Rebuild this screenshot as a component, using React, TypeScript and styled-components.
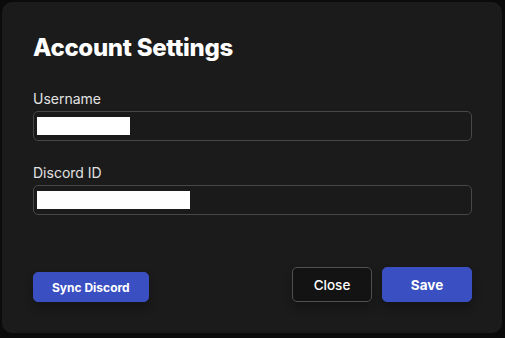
import React from 'react'
import styled, { createGlobalStyle } from 'styled-components'

const GlobalStyle = createGlobalStyle`
  html, body {
    margin: 0;
    padding: 0;
    background: #0b0b0b;
    font-family: Inter, "Noto Sans", "Liberation Sans", sans-serif;
    overflow: hidden;
  }
`

const StyledPage = styled.div`
  width: 505px;
  height: 338px;
  padding: 2px 3px 0 2px;
  box-sizing: border-box;
  display: flex;
  flex-direction: column;
  align-items: stretch;
`

const StyledModal = styled.div`
  flex: none;
  height: 331px;
  box-sizing: border-box;
  background: #1b1b1b;
  border-radius: 10px;
  padding: 31px 30px 31px 31px;
  display: flex;
  flex-direction: column;
`

const StyledTitle = styled.h2`
  margin: 0 0 27px 0;
  font-size: 24px;
  line-height: 30px;
  font-weight: 800;
  color: #ffffff;
  letter-spacing: -0.3px;
`

const StyledField = styled.div`
  display: flex;
  flex-direction: column;
  margin-bottom: 23px;
`

const StyledLabel = styled.label`
  font-size: 14px;
  line-height: 17px;
  color: #e2e2e2;
  margin-bottom: 4px;
`

const StyledInput = styled.div`
  height: 30px;
  box-sizing: border-box;
  border: 1px solid #474747;
  border-radius: 5px;
  background: #1a1a1a;
  display: flex;
  align-items: center;
  padding: 0 3px;
`

const StyledRedacted = styled.div<{ $width: number }>`
  width: ${props => props.$width}px;
  height: 18px;
  background: #ffffff;
`

const StyledFooter = styled.div`
  margin-top: auto;
  display: flex;
  justify-content: space-between;
  align-items: flex-end;
`

const StyledGroup = styled.div`
  display: flex;
  gap: 10px;
`

const StyledButton = styled.button<{ $primary?: boolean; $small?: boolean }>`
  box-sizing: border-box;
  height: ${props => (props.$small ? '30px' : '35px')};
  padding: 0 ${props => (props.$small ? '18px' : '0')};
  width: ${props => (props.$small ? 'auto' : '80px')};
  border-radius: 5px;
  border: 1px solid ${props => (props.$primary ? '#3a4fc2' : '#505050')};
  background: ${props => (props.$primary ? '#3a4fc2' : '#131313')};
  color: #ffffff;
  font-family: inherit;
  font-size: ${props => (props.$small ? '12px' : '13.5px')};
  font-weight: ${props => (props.$primary ? 700 : 500)};
  box-shadow: 0 6px 10px rgba(0, 0, 0, 0.25);
  cursor: pointer;
`

const StyledSaveButton = styled(StyledButton)`
  width: 90px;
`

const StyledBehind = styled.div`
  text-align: center;
  padding-top: 2px;
  font-size: 14px;
  font-weight: 600;
  color: #8a8a8a;
`

const App: React.FC = () => {
  return (
    <>
      <GlobalStyle />
      <StyledPage>
        <StyledModal>
          <StyledTitle>Account Settings</StyledTitle>
          <StyledField>
            <StyledLabel>Username</StyledLabel>
            <StyledInput>
              <StyledRedacted $width={93} />
            </StyledInput>
          </StyledField>
          <StyledField>
            <StyledLabel>Discord ID</StyledLabel>
            <StyledInput>
              <StyledRedacted $width={153} />
            </StyledInput>
          </StyledField>
          <StyledFooter>
            <StyledButton $primary $small>Sync Discord</StyledButton>
            <StyledGroup>
              <StyledButton>Close</StyledButton>
              <StyledSaveButton $primary>Save</StyledSaveButton>
            </StyledGroup>
          </StyledFooter>
        </StyledModal>
        <StyledBehind>Plugin/CAD Support</StyledBehind>
      </StyledPage>
    </>
  )
}

export default App
